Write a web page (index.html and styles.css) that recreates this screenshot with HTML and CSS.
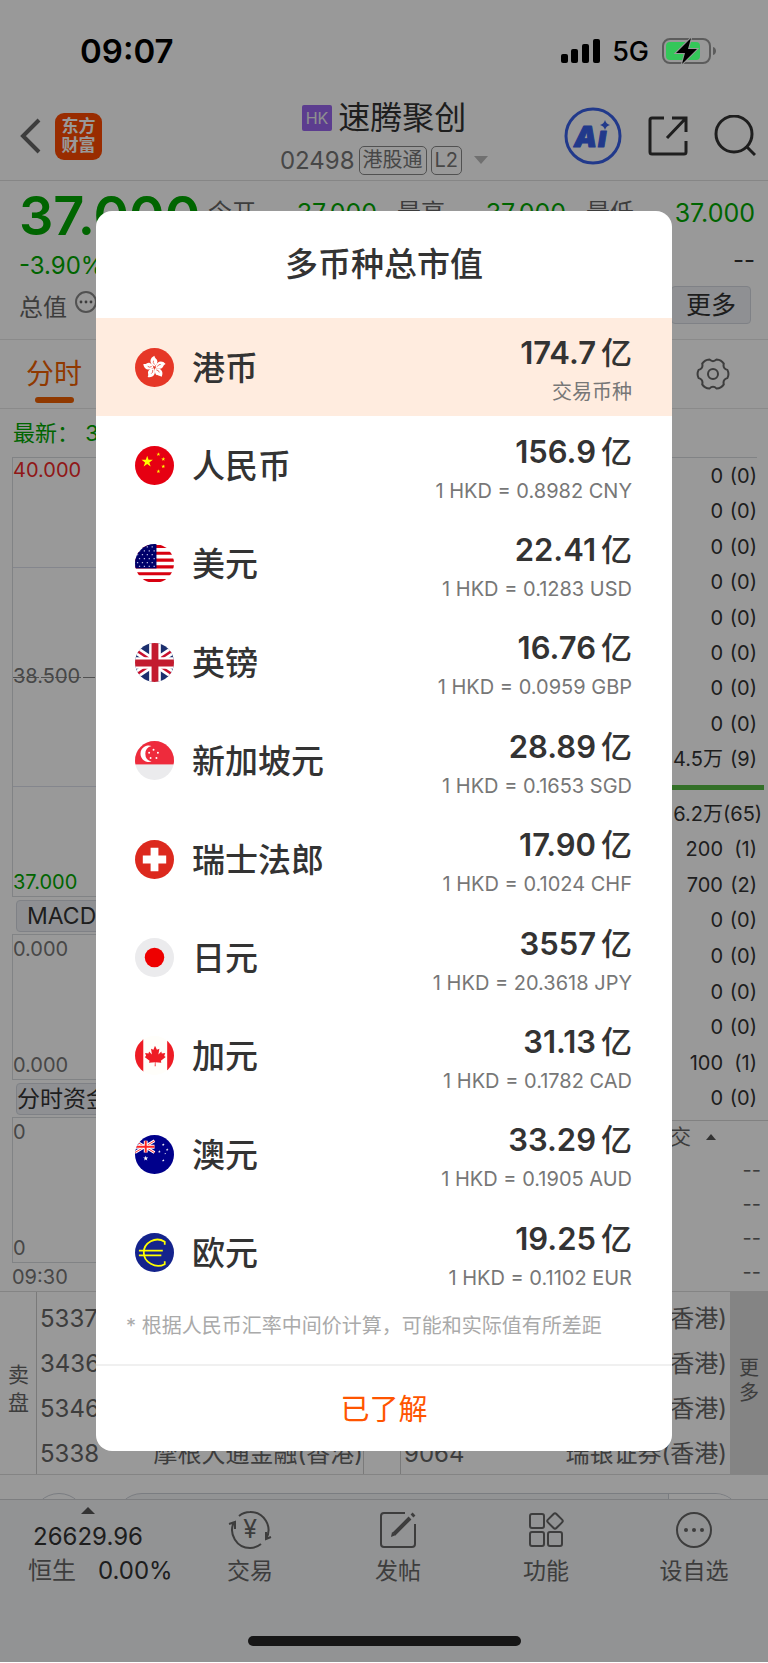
FILE: index.html
```html
<!DOCTYPE html>
<html lang="zh-CN">
<head>
    <meta charset="UTF-8">
    <meta name="viewport" content="width=device-width, initial-scale=1.0">
    <title>速腾聚创 02498</title>
    <link rel="stylesheet" href="styles.css">
</head>
<body>

<div class="app">
    <div class="status-bar">
        <span class="time">09:07</span>
        <div class="status-icons">
            <svg width="39" height="24" viewBox="0 0 39 24">
                <rect x="0" y="15" width="7" height="9" rx="2"/>
                <rect x="10" y="10" width="7" height="14" rx="2"/>
                <rect x="21" y="5" width="7" height="19" rx="2"/>
                <rect x="32" y="0" width="7" height="24" rx="2"/>
            </svg>
            <span class="network">5G</span>
            <svg width="55" height="28" viewBox="0 0 55 28">
                <rect x="1" y="2" width="47" height="24" rx="7" fill="none" stroke="#5c5c5c" stroke-width="2"/>
                <path d="M51 10c4 1 4 7 0 8z" fill="#5c5c5c"/>
                <rect x="4" y="5" width="34" height="18" rx="4" fill="#34c759"/>
                <path d="M29 1L14 16h9l-3 11 15-15h-9z" fill="#000" stroke="#999" stroke-width="2" paint-order="stroke"/>
            </svg>
        </div>
    </div>

    <header class="header">
        <div class="header-left">
            <button class="icon-button" aria-label="返回">
                <svg width="22" height="36" viewBox="0 0 22 36" fill="none" stroke="#666" stroke-width="4"><path d="M19 2L3 18l16 16"/></svg>
            </button>
            <div class="logo">东方<br>财富</div>
        </div>
        <div class="stock">
            <div class="stock-name"><span class="hk">HK</span><h1>速腾聚创</h1></div>
            <div class="stock-code">
                <span>02498</span>
                <span class="chip">港股通</span>
                <span class="chip">L2</span>
                <svg class="caret" width="14" height="8" viewBox="0 0 14 8"><path d="M0 0h14L7 8z" fill="#bbb"/></svg>
            </div>
        </div>
        <div class="header-right">
            <button class="icon-button" aria-label="Ai">
                <svg width="58" height="58" viewBox="0 0 58 58">
                    <circle cx="29" cy="29" r="27" fill="none" stroke="#3860e8" stroke-width="3"/>
                    <text x="10" y="40" class="ai-text">A</text>
                    <text x="34" y="40" class="ai-text">ı</text>
                    <path d="M41 13q1 4 5 5-4 1-5 5-1-4-5-5 4-1 5-5z" fill="#3860e8"/>
                </svg>
            </button>
            <button class="icon-button" aria-label="分享">
                <svg width="42" height="42" viewBox="0 0 42 42" fill="none" stroke="#333" stroke-width="3">
                    <path d="M17 3H5q-2 0-2 2v32q0 2 2 2h32q2 0 2-2V26M25 3h14v14M39 3L20 23"/>
                </svg>
            </button>
            <button class="icon-button" aria-label="搜索">
                <svg width="42" height="42" viewBox="0 0 42 42" fill="none" stroke="#333" stroke-width="3">
                    <circle cx="20" cy="19" r="18"/><path d="M32 31l9 9"/>
                </svg>
            </button>
        </div>
    </header>

    <section class="quote">
        <div class="quote-row quote-main">
            <strong class="price">37.000</strong>
            <dl class="figures">
                <div><dt>今开</dt><dd>37.000</dd></div>
                <div><dt>最高</dt><dd>37.000</dd></div>
                <div><dt>最低</dt><dd>37.000</dd></div>
            </dl>
        </div>
        <div class="quote-row"><span class="green">-3.90%</span><span class="empty">--</span></div>
        <div class="quote-row">
            <span class="total">总值
                <svg width="22" height="22" viewBox="0 0 22 22"><circle cx="11" cy="11" r="10" fill="none" stroke="#888" stroke-width="2"/><g fill="#666"><circle cx="6" cy="11" r="1.4"/><circle cx="11" cy="11" r="1.4"/><circle cx="16" cy="11" r="1.4"/></g></svg>
            </span>
            <button class="more">更多</button>
        </div>
    </section>

    <nav class="tabs">
        <a href="#minute" class="tab">分时</a>
        <button class="icon-button" aria-label="设置">
            <svg width="34" height="34" viewBox="0 0 34 34" fill="none" stroke="#666" stroke-width="2" stroke-linejoin="round">
                <path d="M31.400 12.900Q33.500 17 31.400 21.100 26.500 22.500 27.800 27.400 25.200 31.300 20.600 31.600 17 28 13.400 31.600 8.800 31.300 6.200 27.400 7.500 22.500 2.600 21.100 .5 17 2.600 12.900 7.500 11.500 6.200 6.600 8.800 2.700 13.400 2.400 17 6 20.600 2.400 25.200 2.700 27.800 6.600 26.500 11.500 31.400 12.900z"/>
                <circle cx="17" cy="17" r="5"/>
            </svg>
        </button>
    </nav>

    <div class="latest">最新： 37.000</div>

    <main class="market">
        <div class="charts">
            <div class="plot plot-price">
                <span class="red">40.000</span>
                <span>38.500</span>
                <span class="green">37.000</span>
            </div>
            <div class="indicator"><button class="indicator-button">MACD</button></div>
            <div class="plot"><span>0.000</span><span>0.000</span></div>
            <div class="indicator"><button class="indicator-button flush">分时资金</button></div>
            <div class="plot"><span>0</span><span>0</span></div>
            <div class="start-time">09:30</div>
        </div>
        <div class="book">
            <table class="orders">
                <tr><td>0</td><td>(0)</td></tr>
                <tr><td>0</td><td>(0)</td></tr>
                <tr><td>0</td><td>(0)</td></tr>
                <tr><td>0</td><td>(0)</td></tr>
                <tr><td>0</td><td>(0)</td></tr>
                <tr><td>0</td><td>(0)</td></tr>
                <tr><td>0</td><td>(0)</td></tr>
                <tr><td>0</td><td>(0)</td></tr>
                <tr><td>4.5万</td><td>(9)</td></tr>
            </table>
            <div class="ratio"></div>
            <table class="orders">
                <tr><td>6.2万</td><td>(65)</td></tr>
                <tr><td>200</td><td>(1)</td></tr>
                <tr><td>700</td><td>(2)</td></tr>
                <tr><td>0</td><td>(0)</td></tr>
                <tr><td>0</td><td>(0)</td></tr>
                <tr><td>0</td><td>(0)</td></tr>
                <tr><td>0</td><td>(0)</td></tr>
                <tr><td>100</td><td>(1)</td></tr>
                <tr><td>0</td><td>(0)</td></tr>
            </table>
            <div class="deals">
                <div class="deals-head">成交 <svg width="10" height="6" viewBox="0 0 10 6"><path d="M0 6h10L5 0z" fill="#555"/></svg></div>
                <div>--</div>
                <div>--</div>
                <div>--</div>
                <div>--</div>
            </div>
        </div>
    </main>

    <section class="brokers">
        <div class="side">卖盘</div>
        <ul class="broker-list">
            <li><span>5337</span></li>
            <li><span>3436</span></li>
            <li><span>5346</span></li>
            <li><span>5338</span><span>摩根大通金融(香港)</span></li>
        </ul>
        <ul class="broker-list second">
            <li><span></span><span>(香港)</span></li>
            <li><span></span><span>(香港)</span></li>
            <li><span></span><span>(香港)</span></li>
            <li><span>9064</span><span>瑞银证券(香港)</span></li>
        </ul>
        <button class="side side-more">更多</button>
    </section>

    <div class="comment">
        <div class="avatar"></div>
        <div class="comment-box"><div class="comment-end"></div></div>
    </div>

    <footer class="bottom">
        <nav class="bottom-nav">
            <a href="#hsi" class="index">
                <svg width="14" height="7" viewBox="0 0 14 7"><path d="M0 7h14L7 0z" fill="#555"/></svg>
                <span>26629.96</span>
                <span class="index-change"><span class="index-name">恒生</span>0.00%</span>
            </a>
            <a href="#trade">
                <svg width="44" height="38" viewBox="0 0 44 38" fill="none" stroke="#666" stroke-width="2">
                    <path d="M11 5q5-4 11-4a18 18 0 0 1 16 27M33 33q-5 4-11 4A18 18 0 0 1 6 11M1 13l6-2v7M43 26l-5 2v-7"/>
                    <text x="22" y="27" class="yen">¥</text>
                </svg>
                交易
            </a>
            <a href="#post">
                <svg width="38" height="38" viewBox="0 0 38 38" fill="none" stroke="#666" stroke-width="2">
                    <path d="M26 2H5q-3 0-3 3v28q0 3 3 3h28q3 0 3-3V13"/>
                    <path d="M15 23L31 7M33 5l2-2" stroke-width="4"/>
                    <path d="M12 26l1-5 4 3z" fill="#666" stroke="none"/>
                </svg>
                发帖
            </a>
            <a href="#tools">
                <svg width="36" height="36" viewBox="0 0 36 36" fill="none" stroke="#666" stroke-width="2">
                    <rect x="2" y="2" width="14" height="14" rx="2"/>
                    <rect x="2" y="20" width="14" height="14" rx="2"/>
                    <rect x="20" y="20" width="14" height="14" rx="2"/>
                    <rect x="21" y="3" width="12" height="12" rx="2" transform="rotate(45 27 9)"/>
                </svg>
                功能
            </a>
            <a href="#watch">
                <svg width="38" height="38" viewBox="0 0 38 38">
                    <circle cx="19" cy="19" r="17" fill="none" stroke="#666" stroke-width="2"/>
                    <g fill="#666"><circle cx="11" cy="19" r="2"/><circle cx="19" cy="19" r="2"/><circle cx="27" cy="19" r="2"/></g>
                </svg>
                设自选
            </a>
        </nav>
        <div class="home-indicator"></div>
    </footer>

    <div class="overlay">
        <div class="modal" role="dialog" aria-labelledby="modal-title">
            <h2 id="modal-title">多币种总市值</h2>
            <ul class="currencies">
                <li class="active">
                    <svg class="flag" viewBox="0 0 40 40">
                        <defs><path id="petal" d="M20 19C14 16 15 10 20 8c0 3 3 3 3 6q0 3-3 5z"/></defs>
                        <rect width="40" height="40" fill="#e63727"/>
                        <g fill="#fff">
                            <use href="#petal"/>
                            <use href="#petal" transform="rotate(72 20 20)"/>
                            <use href="#petal" transform="rotate(144 20 20)"/>
                            <use href="#petal" transform="rotate(216 20 20)"/>
                            <use href="#petal" transform="rotate(288 20 20)"/>
                        </g>
                        <g fill="none" stroke="#e63727" stroke-width=".7">
                            <path id="vein" d="M20 17q-2-2-1-4"/>
                            <use href="#vein" transform="rotate(72 20 20)"/>
                            <use href="#vein" transform="rotate(144 20 20)"/>
                            <use href="#vein" transform="rotate(216 20 20)"/>
                            <use href="#vein" transform="rotate(288 20 20)"/>
                        </g>
                    </svg>
                    <span class="name">港币</span>
                    <div class="value"><strong>174.7<i>亿</i></strong><small>交易币种</small></div>
                </li>
                <li>
                    <svg class="flag" viewBox="0 0 40 40">
                        <defs><path id="star" d="M0-6l1.4 4.2h4.4L2.2.8l1.4 4.2L0 2.4-3.6 5l1.4-4.2-3.6-2.6h4.4z"/></defs>
                        <rect width="40" height="40" fill="#e60012"/>
                        <g fill="#ff0">
                            <use href="#star" transform="translate(12.500 16)"/>
                            <use href="#star" transform="translate(24 8.500) scale(.35)"/>
                            <use href="#star" transform="translate(29 13.500) scale(.35)"/>
                            <use href="#star" transform="translate(29 21) scale(.35)"/>
                            <use href="#star" transform="translate(24 26) scale(.35)"/>
                        </g>
                    </svg>
                    <span class="name">人民币</span>
                    <div class="value"><strong>156.9<i>亿</i></strong><small>1 HKD = 0.8982 CNY</small></div>
                </li>
                <li>
                    <svg class="flag" viewBox="0 0 40 40">
                        <rect width="40" height="40" fill="#fff"/>
                        <path d="M0 2.500h40M0 9.500h40M0 16.500h40M0 23.500h40M0 30.500h40M0 37.500h40" stroke="#d80010" stroke-width="3.200"/>
                        <rect width="22" height="25" fill="#00006a"/>
                        <path d="M2 3h20M2 11h20M2 19h20M4 7h18M4 15h18M4 23h18" stroke="#b8b8e0" stroke-width="1.300" stroke-dasharray="1.300 3.700"/>
                    </svg>
                    <span class="name">美元</span>
                    <div class="value"><strong>22.41<i>亿</i></strong><small>1 HKD = 0.1283 USD</small></div>
                </li>
                <li>
                    <svg class="flag" viewBox="0 0 40 40">
                        <rect width="40" height="40" fill="#1b2f6e"/>
                        <path d="M-4 4l48 32M-4 36L44 4" stroke="#fff" stroke-width="8"/>
                        <path d="M-4 4l48 32M-4 36L44 4" stroke="#c8102e" stroke-width="2.500"/>
                        <path d="M20.500 0v40M0 20.500h40" stroke="#fff" stroke-width="12"/>
                        <path d="M20.500 0v40M0 20.500h40" stroke="#c31b2f" stroke-width="7"/>
                    </svg>
                    <span class="name">英镑</span>
                    <div class="value"><strong>16.76<i>亿</i></strong><small>1 HKD = 0.0959 GBP</small></div>
                </li>
                <li>
                    <svg class="flag" viewBox="0 0 40 40">
                        <rect width="40" height="40" fill="#ebebed"/>
                        <rect width="40" height="24" fill="#ee2b3c"/>
                        <path d="M17 5a8.500 8.500 0 1 0 0 16 8.200 8.200 0 0 1 0-16z" fill="#fff"/>
                        <g fill="#fff"><circle cx="19" cy="9" r="1"/><circle cx="14.500" cy="12" r="1"/><circle cx="23.500" cy="12" r="1"/><circle cx="16" cy="17.500" r="1"/><circle cx="22" cy="17.500" r="1"/></g>
                    </svg>
                    <span class="name">新加坡元</span>
                    <div class="value"><strong>28.89<i>亿</i></strong><small>1 HKD = 0.1653 SGD</small></div>
                </li>
                <li>
                    <svg class="flag" viewBox="0 0 40 40">
                        <rect width="40" height="40" fill="#dc291e"/>
                        <path d="M20 8v24M8 20h24" stroke="#fff" stroke-width="8"/>
                    </svg>
                    <span class="name">瑞士法郎</span>
                    <div class="value"><strong>17.90<i>亿</i></strong><small>1 HKD = 0.1024 CHF</small></div>
                </li>
                <li>
                    <svg class="flag" viewBox="0 0 40 40">
                        <rect width="40" height="40" fill="#ebebed"/>
                        <circle cx="20" cy="20" r="10" fill="#ee0000"/>
                    </svg>
                    <span class="name">日元</span>
                    <div class="value"><strong>3557<i>亿</i></strong><small>1 HKD = 20.3618 JPY</small></div>
                </li>
                <li>
                    <svg class="flag" viewBox="0 0 40 40">
                        <rect width="40" height="40" fill="#fffefa"/>
                        <path d="M0 0h8.500v40H0zM33 0h7v40h-7z" fill="#ee1c25"/>
                        <path d="M20.500 10l2 4 2.500-1-1 6 3-3 .5 2 3.500-.5-1 3 1.500 1-5 4 .5 2-6-.7.2 4.200h-1l.2-4.200-6 .7.500-2-5-4 1.500-1-1-3 3.500.5.5-2 3 3-1-6 2.500 1z" fill="#ee1c25"/>
                    </svg>
                    <span class="name">加元</span>
                    <div class="value"><strong>31.13<i>亿</i></strong><small>1 HKD = 0.1782 CAD</small></div>
                </li>
                <li>
                    <svg class="flag" viewBox="0 0 40 40">
                        <rect width="40" height="40" fill="#00008b"/>
                        <path d="M0 6l20 12M0 18L20 6" stroke="#fff" stroke-width="3"/>
                        <path d="M0 6l20 12M0 18L20 6" stroke="#f33" stroke-width="1"/>
                        <path d="M11 6v12M0 12h20" stroke="#fff" stroke-width="4"/>
                        <path d="M11 6v12M0 12h20" stroke="#f22" stroke-width="2"/>
                        <g fill="#fff">
                            <use href="#star" transform="translate(11 24) scale(.45)"/>
                            <use href="#star" transform="translate(29 10) scale(.25)"/>
                            <use href="#star" transform="translate(33 15) scale(.25)"/>
                            <use href="#star" transform="translate(25 17) scale(.25)"/>
                            <use href="#star" transform="translate(31 19) scale(.15)"/>
                            <use href="#star" transform="translate(29 26) scale(.25)"/>
                        </g>
                    </svg>
                    <span class="name">澳元</span>
                    <div class="value"><strong>33.29<i>亿</i></strong><small>1 HKD = 0.1905 AUD</small></div>
                </li>
                <li>
                    <svg class="flag" viewBox="0 0 40 40">
                        <rect width="40" height="40" fill="#14238c"/>
                        <path d="M30.500 12v-3C21 3 9 10 9 20s12 17 21.500 12v-3M4 18h24.500M4 23h23" fill="none" stroke="#ff0" stroke-width="1.800"/>
                    </svg>
                    <span class="name">欧元</span>
                    <div class="value"><strong>19.25<i>亿</i></strong><small>1 HKD = 0.1102 EUR</small></div>
                </li>
            </ul>
            <p class="note">* 根据人民币汇率中间价计算，可能和实际值有所差距</p>
            <button class="confirm">已了解</button>
        </div>
    </div>
</div>

</body>
</html>
```
FILE: styles.css
```css
* {
    box-sizing: border-box;
}
body {
    margin: 0;
    background-color: white;
    color: #333;
    font-family: Inter, "Noto Sans CJK SC", sans-serif;
    font-size: 24px;
}
h1, h2, p, ul, dl, dd {
    margin: 0;
    padding: 0;
}
ul {
    list-style: none;
}
a {
    color: inherit;
    text-decoration: none;
}
button {
    font-family: inherit;
    color: inherit;
    cursor: pointer;
}
svg {
    display: block;
    flex: none;
}
.app {
    position: relative;
    overflow: hidden;
}
.green {
    color: #00a800;
}
.red {
    color: #f02828;
}
.icon-button {
    padding: 0;
    border: none;
    background: none;
}

/* status bar stays bright above the overlay */
.status-bar {
    position: relative;
    z-index: 2;
    display: flex;
    justify-content: space-between;
    align-items: center;
    height: 94px;
    padding: 8px 51px 0 80px;
    color: black;
}
.time {
    font-size: 33px;
    font-weight: 600;
}
.status-icons {
    display: flex;
    align-items: center;
}
.network {
    margin: 0 13px 0 12px;
    font-size: 27px;
    font-weight: 500;
}

.header {
    display: grid;
    grid-template-columns: 1fr auto 1fr;
    align-items: center;
    height: 87px;
    padding: 0 12px 0 20px;
    border-bottom: 1px solid #e0e0e0;
}
.header-left {
    display: flex;
    align-items: center;
    gap: 13px;
    padding-bottom: 2px;
}
.logo {
    width: 47px;
    height: 47px;
    padding-top: 4px;
    border-radius: 9px;
    background-color: #ff4a00;
    color: white;
    font-size: 17px;
    font-weight: 700;
    line-height: 19px;
    text-align: center;
}
.stock {
    padding-right: 8px;
}
.stock-name, .stock-code {
    display: flex;
    align-items: center;
    justify-content: center;
}
.stock-name {
    gap: 6px;
    height: 40px;
    margin-bottom: 6px;
}
.hk {
    padding: 0 4px;
    border-radius: 2px;
    background-color: #9966ee;
    color: #eee;
    font-size: 16px;
    line-height: 26px;
}
h1 {
    font-size: 32px;
    font-weight: 400;
    line-height: 40px;
}
.stock-code {
    gap: 4px;
    height: 32px;
    color: #777;
}
.chip {
    padding: 0 3px;
    border: 1px solid #888;
    border-radius: 5px;
    font-size: 20px;
    line-height: 27px;
}
.caret {
    margin-left: 8px;
}
.header-right {
    display: flex;
    align-items: center;
    justify-content: flex-end;
    gap: 25px;
    padding-bottom: 2px;
}
.ai-text {
    fill: #3860e8;
    stroke: #3860e8;
    stroke-width: 1px;
    stroke-linejoin: round;
    font-size: 29px;
    font-weight: 900;
    font-style: italic;
}

.quote {
    padding: 4px 13px 14px 19px;
    border-bottom: 1px solid #e6e6e6;
}
.quote-row {
    display: flex;
    align-items: center;
    justify-content: space-between;
    height: 40px;
}
.quote-main {
    height: 60px;
    color: #00a800;
}
.price {
    width: 189px;
    font-size: 54px;
    font-weight: 600;
}
.figures {
    display: flex;
    flex: 1;
    justify-content: space-between;
    gap: 20px;
    padding-bottom: 5px;
    line-height: 30px;
}
.figures div {
    display: flex;
    flex: 1;
    justify-content: space-between;
}
.figures dd {
    font-size: 25px;
}
.figures dt, .total {
    color: #666;
}
.empty {
    padding-bottom: 11px;
}
.total {
    display: flex;
    gap: 8px;
}
.total svg {
    margin-top: 3px;
}
.more {
    width: 80px;
    height: 38px;
    margin-right: 4px;
    padding: 0;
    border: 1px solid #d4d8e0;
    border-radius: 4px;
    background-color: #eef1f5;
    font-size: 25px;
    line-height: 34px;
}

.tabs {
    display: flex;
    align-items: center;
    justify-content: space-between;
    height: 69px;
    padding: 0 38px 0 26px;
    border-bottom: 1px solid #e6e6e6;
}
.tab {
    display: flex;
    flex-direction: column;
    align-items: center;
    color: #f06000;
    font-size: 28px;
    line-height: 44px;
}
.tab::before {
    content: "";
    height: 6px;
}
.tab::after {
    content: "";
    width: 39px;
    height: 6px;
    margin-top: 1px;
    border-radius: 3px;
    background-color: #f06000;
}
.latest {
    padding-left: 13px;
    color: #00a800;
    font-size: 22px;
    line-height: 48px;
}

.market {
    display: grid;
    grid-template-columns: 1fr 264px;
    border-bottom: 1px solid #ddd;
}
.charts {
    padding-left: 12px;
    color: #777;
    font-size: 20px;
}
.plot {
    display: flex;
    flex-direction: column;
    justify-content: space-between;
    height: 146px;
    padding: 2px 0;
    border: 1px solid #d8dade;
    line-height: 24px;
}
.plot-price {
    height: 440px;
    padding: 0 0 2px;
    background-image:
        linear-gradient(#dcdfec, #dcdfec),
        linear-gradient(#dcdfec, #dcdfec),
        repeating-linear-gradient(90deg, #888 0 12px, transparent 12px 14px);
    background-size: 100% 1px;
    background-position: 0 25%, 0 75%, 0 50%;
    background-repeat: no-repeat;
}
.indicator {
    display: flex;
    align-items: center;
    height: 37px;
    padding-left: 4px;
}
.indicator-button {
    height: 32px;
    padding: 0 10px;
    border: 1px solid #d4d8e0;
    border-radius: 4px;
    background-color: #eef1f5;
    color: #333;
    font-size: 23px;
    line-height: 28px;
}
.indicator-button.flush {
    padding: 0;
}
.start-time {
    line-height: 28px;
}
.book {
    font-size: 20px;
}
.orders {
    width: calc(100% - 11px);
    height: 320px;
    border-collapse: collapse;
    table-layout: fixed;
}
.orders:first-child {
    border-top: 1px solid #d8dade;
}
.orders td {
    padding: 0;
    line-height: 24px;
    text-align: right;
}
.orders td:last-child {
    width: 34px;
}
.ratio {
    height: 5px;
    margin: 8px 4px 6px 0;
    background-color: #55bb44;
}
.deals {
    margin-top: 4px;
    padding-right: 7px;
    border-top: 1px solid #d8d8d8;
    color: #666;
    line-height: 34px;
    text-align: right;
}
.deals-head {
    display: flex;
    align-items: center;
    justify-content: flex-end;
    gap: 15px;
    padding-right: 45px;
    font-size: 21px;
    line-height: 32px;
}

.brokers {
    display: grid;
    grid-template-columns: 37px 327px 1fr 38px;
    border-bottom: 1px solid #ddd;
    color: #666;
}
.side {
    display: flex;
    align-items: center;
    justify-content: center;
    padding: 12px 7px 0 8px;
    border: none;
    border-right: 1px solid #ccc;
    font-size: 21px;
    line-height: 28px;
    text-align: center;
}
.side-more {
    padding: 0 8px 4px;
    border: none;
    background-color: #ddd;
    font-size: 20px;
    line-height: 25px;
}
.broker-list {
    display: flex;
    flex-direction: column;
    gap: 3px;
    padding: 5px 0 0 3px;
    border-right: 1px solid #ccc;
}
.broker-list.second {
    margin-left: 36px;
    padding: 5px 3px 0;
    border-left: 1px solid #ccc;
    border-right: none;
}
.broker-list li {
    display: flex;
    justify-content: space-between;
    height: 42px;
    font-size: 24px;
    line-height: 44px;
    white-space: nowrap;
}

.comment {
    display: flex;
    gap: 29px;
    height: 24px;
    padding: 18px 26px 0 32px;
    overflow: hidden;
}
.avatar {
    width: 54px;
    height: 54px;
    border: 1px solid #ccd0d8;
    border-radius: 50%;
}
.comment-box {
    display: flex;
    flex: 1;
    justify-content: flex-end;
    height: 54px;
    border: 1px solid #ccd0d8;
    border-radius: 27px;
    background-color: #f4f5f7;
}
.comment-end {
    width: 73px;
    border-left: 1px solid #ccd0d8;
    border-radius: 0 27px 27px 0;
    background-color: white;
}
.bottom {
    height: 163px;
    border-top: 1px solid #d0d2d6;
    background-color: #f4f5f7;
}
.bottom-nav {
    display: grid;
    grid-template-columns: 176px repeat(4, 1fr);
    height: 136px;
    padding-top: 10px;
    color: #666;
}
.bottom-nav a {
    display: flex;
    flex-direction: column;
    align-items: center;
    font-size: 23px;
    line-height: 34px;
}
.bottom-nav a svg {
    height: 40px;
    margin-bottom: 4px;
}
.bottom-nav .index {
    color: #333;
    font-size: 24px;
    white-space: nowrap;
}
.bottom-nav .index svg {
    height: 7px;
    margin: -3px 0 6px;
}
.index-change {
    display: flex;
    gap: 22px;
    padding-left: 28px;
    align-self: flex-start;
}
.index-name {
    color: #666;
}
.yen {
    fill: #666;
    stroke: none;
    font-size: 25px;
    text-anchor: middle;
}
.home-indicator {
    width: 273px;
    height: 10px;
    margin: 0 auto;
    border-radius: 5px;
    background-color: #252525;
}

.overlay {
    position: absolute;
    inset: 0;
    z-index: 1;
    display: flex;
    align-items: center;
    justify-content: center;
    background-color: rgba(0, 0, 0, 0.4);
}
.modal {
    width: 75%;
    border-radius: 16px;
    background-color: white;
    overflow: hidden;
}
.modal h2 {
    font-size: 33px;
    font-weight: 500;
    line-height: 107px;
    text-align: center;
}
.currencies {
    display: grid;
    grid-template-rows: repeat(10, 1fr);
    height: 984px;
}
.currencies li {
    display: flex;
    align-items: center;
    padding: 0 40px 0 39px;
}
.currencies .active {
    background-color: #ffecdf;
}
.flag {
    width: 39px;
    height: 39px;
    border-radius: 50%;
}
.name {
    margin-left: 18px;
    padding-bottom: 3px;
    font-size: 33px;
    font-weight: 500;
}
.value {
    display: flex;
    flex: 1;
    flex-direction: column;
    align-items: flex-end;
    padding-top: 6px;
}
.value strong {
    display: flex;
    gap: 5px;
    font-size: 31px;
    font-weight: 600;
    line-height: 44px;
}
.value i {
    font-style: normal;
    font-weight: 500;
}
.value small {
    color: #777;
    font-size: 20px;
    line-height: 34px;
}
.note {
    padding: 0 0 14px 30px;
    color: #aaa;
    font-size: 20px;
    line-height: 48px;
}
.confirm {
    display: block;
    width: 100%;
    height: 87px;
    padding: 0 0 4px;
    border: none;
    border-top: 2px solid #f0f0f0;
    background: none;
    color: #ff5500;
    font-size: 29px;
}
```
